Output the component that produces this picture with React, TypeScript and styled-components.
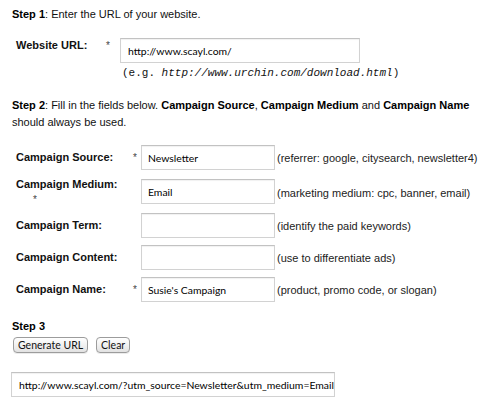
import React from "react";
import styled, { createGlobalStyle } from "styled-components";

const Global = createGlobalStyle`
  html, body { margin: 0; padding: 0; background: #fff; }
  body { font-family: "Liberation Sans", Arial, sans-serif; font-size: 11px; color: #000; }
`;

const Page = styled.div`
  display: flex;
  flex-direction: column;
  width: 487px;
`;

const Para = styled.p<{ $top: number; $lh?: number }>`
  margin: ${(p) => p.$top}px 0 0;
  padding: 0 12px;
  font-size: 11px;
  line-height: ${(p) => p.$lh ?? 15}px;
  color: #111;
  b { font-weight: bold; color: #000; }
`;

const Row = styled.div<{ $top: number; $align?: string }>`
  display: flex;
  align-items: ${(p) => p.$align ?? "center"};
  margin-top: ${(p) => p.$top}px;
  padding-left: 16px;
`;

const Label = styled.div<{ $w: number }>`
  width: ${(p) => p.$w}px;
  font-weight: bold;
  font-size: 11px;
  line-height: 15px;
  color: #111;
  flex-shrink: 0;
`;

const StarLine = styled.div`
  padding-left: 17px;
  font-weight: normal;
  font-size: 10px;
  color: #444;
`;

const Star = styled.div<{ $w: number; $pad?: number }>`
  width: ${(p) => p.$w}px;
  flex-shrink: 0;
  font-size: 10px;
  line-height: 15px;
  color: #444;
  padding-left: ${(p) => p.$pad ?? 4}px;
  box-sizing: border-box;
`;

const Field = styled.input<{ $w: number; $pad?: number }>`
  box-sizing: border-box;
  width: ${(p) => p.$w}px;
  height: 25px;
  margin: 0;
  padding: 0 0 0 ${(p) => p.$pad ?? 6}px;
  border: 1px solid #d2d2d2;
  border-top-color: #c2c2c2;
  box-shadow: inset 0 1px 1px rgba(0, 0, 0, 0.06);
  background: #fff;
  font-family: Lato, "DejaVu Sans", sans-serif;
  font-size: 10.4px;
  color: #000;
  outline: none;
  flex-shrink: 0;
`;

const Hint = styled.span`
  margin-left: 2px;
  font-size: 11px;
  color: #222;
  white-space: nowrap;
`;

const MonoHint = styled.div`
  margin-top: 3px;
  padding-left: 122px;
  font-family: "Liberation Mono", "Courier New", monospace;
  font-size: 11px;
  line-height: 15px;
  color: #111;
  i { font-style: italic; }
`;

const Buttons = styled.div`
  display: flex;
  gap: 8px;
  margin-top: 3px;
  padding-left: 13px;
`;

const Btn = styled.button`
  height: 16px;
  padding: 0 4px;
  margin: 0;
  border: 1px solid #9c9c9c;
  border-radius: 4px;
  background: linear-gradient(#ffffff, #f1f1f1 50%, #e2e2e2);
  box-shadow: 0 1px 0 rgba(0, 0, 0, 0.08);
  font-family: Lato, "DejaVu Sans", sans-serif;
  font-size: 10.5px;
  line-height: 14px;
  color: #111;
`;

const Output = styled.div`
  margin-top: 19px;
  padding-left: 11px;
`;

type RowDef = {
  label: string;
  value: string;
  hint: string;
  required?: boolean;
  top: number;
};

const rows: RowDef[] = [
  { label: "Campaign Source:", value: "Newsletter", hint: "(referrer: google, citysearch, newsletter4)", required: true, top: 14 },
  { label: "Campaign Term:", value: "", hint: "(identify the paid keywords)", top: 6 },
  { label: "Campaign Content:", value: "", hint: "(use to differentiate ads)", top: 7 },
  { label: "Campaign Name:", value: "Susie's Campaign", hint: "(product, promo code, or slogan)", required: true, top: 7 },
];

function CampaignRow({ r }: { r: RowDef }) {
  return (
    <Row $top={r.top}>
      <Label $w={113}>{r.label}</Label>
      <Star $w={12}>{r.required ? "*" : ""}</Star>
      <Field $w={134} defaultValue={r.value} readOnly />
      <Hint>{r.hint}</Hint>
    </Row>
  );
}

export default function App() {
  return (
    <Page>
      <Global />
      <Para $top={7}>
        <b>Step 1</b>: Enter the URL of your website.
      </Para>
      <Row $top={16} $align="flex-start">
        <Label $w={90}>Website URL:</Label>
        <Star $w={14} $pad={0}>*</Star>
        <Field $w={240} $pad={7} defaultValue="http://www.scayl.com/" readOnly />
      </Row>
      <MonoHint>
        (e.g. <i>http://www.urchin.com/download.html</i>)
      </MonoHint>
      <Para $top={16} $lh={17}>
        <b>Step 2</b>: Fill in the fields below. <b>Campaign Source</b>, <b>Campaign Medium</b> and{" "}
        <b>Campaign Name</b> should always be used.
      </Para>
      <CampaignRow r={rows[0]} />
      <Row $top={9} $align="flex-start">
        <Label $w={125} style={{ marginTop: -2 }}>
          Campaign Medium:
          <StarLine>*</StarLine>
        </Label>
        <Field $w={134} defaultValue="Email" readOnly />
        <Hint style={{ alignSelf: "center" }}>(marketing medium: cpc, banner, email)</Hint>
      </Row>
      <CampaignRow r={rows[1]} />
      <CampaignRow r={rows[2]} />
      <CampaignRow r={rows[3]} />
      <Para $top={17}>
        <b>Step 3</b>
      </Para>
      <Buttons>
        <Btn type="button">Generate URL</Btn>
        <Btn type="button">Clear</Btn>
      </Buttons>
      <Output>
        <Field
          $w={324}
          $pad={7}
          defaultValue="http://www.scayl.com/?utm_source=Newsletter&utm_medium=Email&utm_campaign=Susie%27s%20Campaign"
          readOnly
        />
      </Output>
    </Page>
  );
}
